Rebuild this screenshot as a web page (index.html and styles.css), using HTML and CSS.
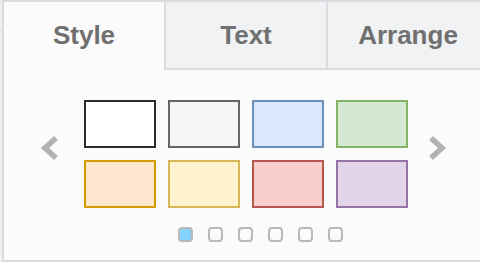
FILE: index.html
```html
<!DOCTYPE html>
<html lang="en">
<head>
  <meta charset="UTF-8">
  <title>Format</title>
  <link rel="stylesheet" href="styles.css">
</head>
<body>
  <div class="edge"><div class="edge-line"></div></div>

  <div class="panel">
    <div class="tabs">
      <div class="tab active">Style</div>
      <div class="tab">Text</div>
      <div class="tab">Arrange</div>
    </div>

    <div class="styles">
      <div class="picker">
        <svg class="arrow" width="20" height="26" viewBox="0 0 20 26">
          <polyline points="16,3 5,13 16,23" />
        </svg>

        <div class="swatches">
          <div class="swatch s-default"></div>
          <div class="swatch s-grey"></div>
          <div class="swatch s-blue"></div>
          <div class="swatch s-green"></div>
          <div class="swatch s-orange"></div>
          <div class="swatch s-yellow"></div>
          <div class="swatch s-red"></div>
          <div class="swatch s-purple"></div>
        </div>

        <svg class="arrow" width="20" height="26" viewBox="0 0 20 26">
          <polyline points="4,3 15,13 4,23" />
        </svg>
      </div>

      <div class="pager">
        <span class="dot current"></span>
        <span class="dot"></span>
        <span class="dot"></span>
        <span class="dot"></span>
        <span class="dot"></span>
        <span class="dot"></span>
      </div>
    </div>
  </div>
</body>
</html>
```

FILE: styles.css
```css
body {
  margin: 0;
  width: 480px;
  height: 262px;
  overflow: hidden;
  display: flex;
  background-color: #fbfbfb;
  font-family: "Liberation Sans", Arial, sans-serif;
}

.edge {
  width: 2px;
  flex-shrink: 0;
  background-color: #eeeff1;
}

.edge-line {
  height: 1px;
  margin-top: 30px;
  background-color: #d6d8dc;
}

.panel {
  width: 484px;
  flex-shrink: 0;
  height: 258px;
  border-top: 2px solid #dadce0;
  border-bottom: 2px solid #dadce0;
  border-left: 2px solid #dadce0;
  display: flex;
  flex-direction: column;
}

.tabs {
  display: flex;
}

.tab {
  width: 160px;
  height: 66px;
  line-height: 66px;
  text-align: center;
  font-size: 26px;
  font-weight: bold;
  color: #707070;
  background-color: #f1f2f4;
  border-left: 2px solid #dadce0;
  border-bottom: 2px solid #dadce0;
}

.tab.active {
  border-left: none;
  background-color: #fbfbfb;
  border-bottom-color: #fbfbfb;
}

.styles {
  display: flex;
  flex-direction: column;
  padding-top: 30px;
}

.picker {
  display: flex;
  align-items: flex-start;
  padding-left: 36px;
}

.arrow {
  margin-top: 35px;
  fill: none;
  stroke: #b2b2b2;
  stroke-width: 5.5;
}

.swatches {
  display: grid;
  grid-template-columns: repeat(4, 72px);
  grid-auto-rows: 48px;
  gap: 12px;
  margin: 0 19px 0 24px;
}

.swatch {
  box-sizing: border-box;
  border: 2px solid;
}

.s-default { background-color: #ffffff; border-color: #2b2b2b; }
.s-grey    { background-color: #f5f5f5; border-color: #666666; }
.s-blue    { background-color: #dae8fc; border-color: #6c8ebf; }
.s-green   { background-color: #d5e8d4; border-color: #82b366; }
.s-orange  { background-color: #ffe6cc; border-color: #d79b00; }
.s-yellow  { background-color: #fff2cc; border-color: #d6b656; }
.s-red     { background-color: #f8cecc; border-color: #b85450; }
.s-purple  { background-color: #e1d5e7; border-color: #9673a6; }

.pager {
  display: flex;
  gap: 15px;
  padding-left: 174px;
  margin-top: 19px;
}

.dot {
  box-sizing: border-box;
  width: 15px;
  height: 15px;
  border: 2px solid #b9b9b9;
  border-radius: 4px;
}

.dot.current {
  background-color: #82d3ff;
}
```
